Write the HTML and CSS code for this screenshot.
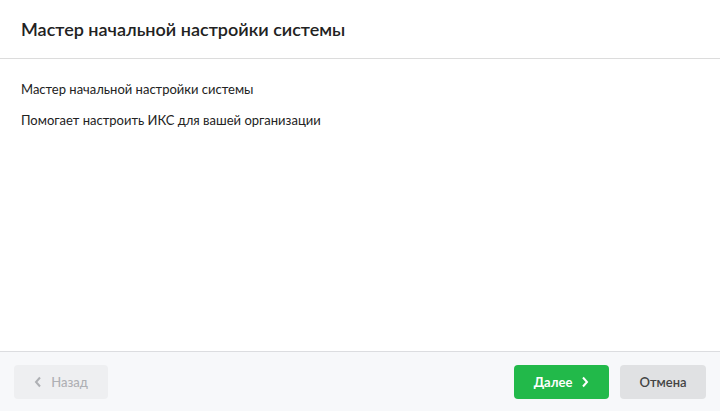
FILE: index.html
```html
<!DOCTYPE html>
<html lang="ru">
<head>
  <meta charset="UTF-8">
  <title>Мастер начальной настройки системы</title>
  <link rel="stylesheet" href="styles.css">
</head>
<body>
  <div class="wizard">
    <div class="wizard-head">
      <h1>Мастер начальной настройки системы</h1>
    </div>
    <div class="wizard-body">
      <p>Мастер начальной настройки системы</p>
      <p>Помогает настроить ИКС для вашей организации</p>
    </div>
    <div class="wizard-foot">
      <button class="btn btn-back" disabled>
        <svg width="8" height="12" viewBox="0 0 8 12"><path d="M6 1.5 L2 6 L6 10.5" fill="none" stroke="currentColor" stroke-width="2"/></svg>
        Назад
      </button>
      <div class="spacer"></div>
      <button class="btn btn-next">
        Далее
        <svg width="8" height="12" viewBox="0 0 8 12"><path d="M2 1.5 L6 6 L2 10.5" fill="none" stroke="currentColor" stroke-width="2"/></svg>
      </button>
      <button class="btn btn-cancel">Отмена</button>
    </div>
  </div>
</body>
</html>
```
FILE: styles.css
```css
html, body { margin: 0; padding: 0; height: 100%; }
body { font-family: Lato, "Noto Sans", sans-serif; color: #222; background: #fff; }
.wizard { display: flex; flex-direction: column; height: 411px; }
.wizard-head { height: 59px; border-bottom: 1px solid #dcdcdc; display: flex; align-items: center; padding: 0 21px; box-sizing: border-box; }
h1 { margin: 0; font-size: 18px; font-weight: 600; color: #222; }
.wizard-body { flex: 1; padding: 21px 21px; }
.wizard-body p { margin: 0 0 13px; font-size: 13px; line-height: 18px; }
.wizard-foot { height: 60px; border-top: 1px solid #dcdde0; background: #f7f8fa; display: flex; align-items: center; padding: 0 14px; box-sizing: border-box; gap: 11px; }
.spacer { flex: 1; }
.btn { height: 34px; border: none; border-radius: 4px; font-family: inherit; font-size: 13px; font-weight: 600; display: flex; align-items: center; justify-content: center; gap: 9px; cursor: pointer; }
.btn-back { width: 94px; background: #eeeff1; color: #aeb0b4; font-weight: 500; }
.btn-next { width: 95px; background: #22b94a; color: #fff; font-weight: 700; }
.btn-cancel { width: 86px; background: #e0e1e3; color: #444; }
```
